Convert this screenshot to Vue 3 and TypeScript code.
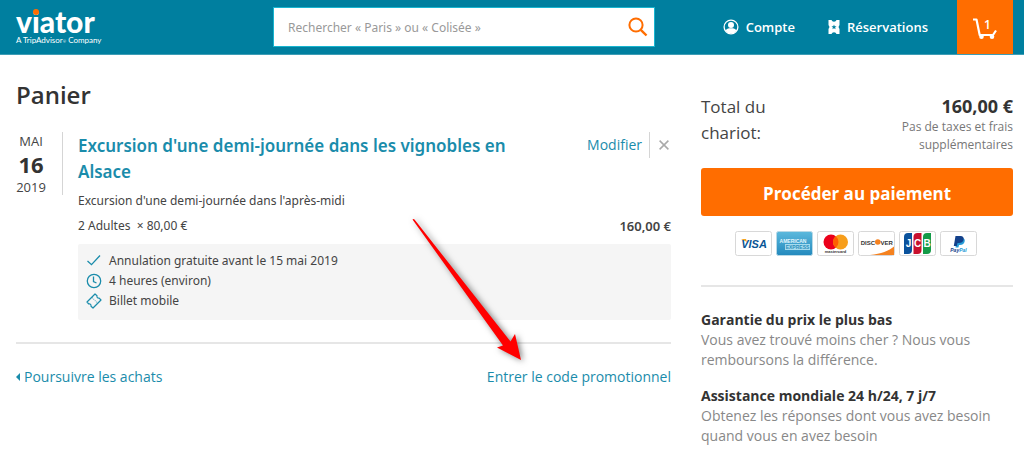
<script setup lang="ts">
import { ref } from 'vue'

interface Note {
  title: string
  lines: string[]
}

const query = ref('')

const notes: Note[] = [
  { title: 'Garantie du prix le plus bas', lines: ['Vous avez trouvé moins cher ? Nous vous', 'remboursons la différence.'] },
  { title: 'Assistance mondiale 24 h/24, 7 j/7', lines: ['Obtenez les réponses dont vous avez besoin', 'quand vous en avez besoin'] },
]
</script>

<template>
  <div class="page">
    <header class="top">
      <a class="logo" href="#" aria-label="viator">
        <span class="word">viator<i class="dot"></i></span>
        <span class="tag">A TripAdvisor<span class="mark">®</span> Company</span>
      </a>
      <form class="search" @submit.prevent>
        <input v-model="query" type="text" aria-label="Rechercher" placeholder="Rechercher « Paris » ou « Colisée »" />
        <button type="submit" aria-label="Lancer la recherche">
          <svg width="20" height="20" viewBox="0 0 20 20" fill="none" stroke="#ff6d00" stroke-width="2">
            <circle cx="8" cy="8" r="6.6" />
            <path d="M12.8 12.8L18.5 18.5" stroke-width="2.4" />
          </svg>
        </button>
      </form>
      <nav class="nav">
        <a href="#" class="account">
          <svg width="16" height="16" viewBox="0 0 16 16">
            <circle cx="8" cy="8" r="6.9" fill="none" stroke="#fff" stroke-width="1.3" />
            <circle cx="8" cy="6" r="3" fill="#fff" />
            <path d="M2.500 11.800C3.400 9.800 5.200 9.300 8 9.300s4.600.5 5.500 2.500C12 14 10 14.500 8 14.500S4 14 2.500 11.800Z" fill="#fff" />
          </svg>
          <span>Compte</span>
        </a>
        <a href="#" class="bookings">
          <svg width="12" height="14" viewBox="0 0 12 14">
            <path fill="#fff" fill-rule="evenodd" d="M.5 0H3.500Q4 1.700 6 1.700T8.500 0H11.500V5L10.500 7L11.500 9V14H8.500Q8 12.300 6 12.300T3.500 14H.5V9L1.500 7L.5 5ZM6 4.500l-.7 1.700-1.800.1 1.400 1.200-.5 1.800L6 8.300l1.600 1-.5-1.800 1.400-1.200-1.800-.1Z" />
          </svg>
          <span>Réservations</span>
        </a>
        <a href="#" class="cart" aria-label="Panier, 1 article">
          <svg width="24" height="22" viewBox="0 0 24 22">
            <path d="M0 1.500H3.500L6.700 17H20L23 12.500" fill="none" stroke="#fff" stroke-width="2.200" stroke-linejoin="round" />
            <circle cx="8.500" cy="18.700" r="2.300" fill="#fff" />
            <circle cx="19" cy="18.700" r="2.300" fill="#fff" />
          </svg>
          <span class="count">1</span>
        </a>
      </nav>
    </header>

    <main class="body">
      <section class="left">
        <h1>Panier</h1>
        <article class="item">
          <time class="date" datetime="2019-05-16">
            <span>MAI</span>
            <strong>16</strong>
            <span>2019</span>
          </time>
          <div class="details">
            <div class="head">
              <h2><a href="#">Excursion d'une demi-journée dans les vignobles en Alsace</a></h2>
              <div class="actions">
                <a href="#">Modifier</a>
                <button type="button" aria-label="Supprimer">
                  <svg width="10" height="10" viewBox="0 0 10 10" fill="none" stroke="#aaa" stroke-width="1.500">
                    <path d="M.6.6l8.800 8.800M9.400.6L.6 9.400" />
                  </svg>
                </button>
              </div>
            </div>
            <p class="option">Excursion d'une demi-journée dans l'après-midi</p>
            <div class="price">
              <span>2 Adultes&nbsp; <small>×</small> 80,00 €</span>
              <strong>160,00 €</strong>
            </div>
            <ul class="features">
              <li>
                <svg width="16" height="16" viewBox="0 0 16 16" fill="none" stroke="#1a8cab" stroke-width="1.300">
                  <path d="M1.500 8l4 3.700L14 2.500" />
                </svg>
                <span>Annulation gratuite avant le 15 mai 2019</span>
              </li>
              <li>
                <svg width="16" height="16" viewBox="0 0 16 16" fill="none" stroke="#1a8cab" stroke-width="1.300">
                  <circle cx="8" cy="8" r="6.700" />
                  <path d="M7.500 3.500v5l3 1.500" />
                </svg>
                <span>4 heures (environ)</span>
              </li>
              <li>
                <svg width="16" height="16" viewBox="0 0 16 16" fill="none" stroke="#1a8cab" stroke-width="1.200" stroke-linejoin="round">
                  <path d="M1 9L9 1l2 1.700c-.4 1.500.6 2.700 2.200 2.400L15 7l-8 8-2-1.800c.3-1.400-.8-2.600-2.200-2.200Z" />
                  <path d="M6 4.500l5 5" stroke-dasharray="1 1" stroke-opacity=".6" />
                </svg>
                <span>Billet mobile</span>
              </li>
            </ul>
          </div>
        </article>
        <div class="links">
          <a href="#" class="back"><i class="caret"></i>Poursuivre les achats</a>
          <a href="#">Entrer le code promotionnel</a>
        </div>
      </section>

      <aside class="side">
        <div class="total">
          <span class="label">Total du chariot:</span>
          <div class="sum">
            <strong>160,00 €</strong>
            <small>Pas de taxes et frais<br />supplémentaires</small>
          </div>
        </div>
        <button type="button" class="pay">Procéder au paiement</button>
        <div class="cards">
          <svg viewBox="0 0 37 25" role="img" aria-label="Visa">
            <rect x=".5" y=".5" width="36" height="24" rx="2" fill="#fff" stroke="#d8d8d8" />
            <path d="M6 8h5l1 3z" fill="#f7a521" />
            <text x="19" y="17" text-anchor="middle" font-size="11" font-weight="800" font-style="italic" fill="#0a5595">VISA</text>
          </svg>
          <svg viewBox="0 0 37 25" role="img" aria-label="American Express">
            <defs>
              <linearGradient id="amex" x1="0" y1="0" x2="0" y2="1">
                <stop offset="0" stop-color="#5cb9dd" />
                <stop offset="1" stop-color="#2389bd" />
              </linearGradient>
            </defs>
            <rect x=".5" y=".5" width="36" height="24" rx="2" fill="url(#amex)" stroke="#b9d9e6" />
            <rect x="9" y="13" width="25" height="6" fill="#a5dbee" />
            <text x="17" y="12" text-anchor="middle" font-size="5" font-weight="800" fill="#e5f6fc">AMERICAN</text>
            <text x="21.500" y="18" text-anchor="middle" font-size="5" font-weight="800" fill="#2b8fbc">EXPRESS</text>
          </svg>
          <svg viewBox="0 0 37 25" role="img" aria-label="Mastercard">
            <rect x=".5" y=".5" width="36" height="24" rx="2" fill="#fff" stroke="#d8d8d8" />
            <circle cx="14" cy="11" r="7.500" fill="#eb001b" />
            <circle cx="23.500" cy="11" r="7.500" fill="#f79e1b" />
            <path d="M18.750 5.200a7.500 7.500 0 0 1 0 11.600a7.500 7.500 0 0 1 0-11.600Z" fill="#ff5f00" />
            <text x="18.500" y="22" text-anchor="middle" font-size="4" font-weight="700" fill="#333">mastercard</text>
          </svg>
          <svg viewBox="0 0 37 25" role="img" aria-label="Discover">
            <rect x=".5" y=".5" width="36" height="24" rx="2" fill="#fff" stroke="#d8d8d8" />
            <path d="M36 15.500V24H12C23 23 31 19.500 36 15.500Z" fill="#f58220" />
            <text x="17" y="13.500" text-anchor="end" font-size="6" font-weight="700" fill="#333">DISC</text>
            <circle cx="19.800" cy="11" r="2.800" fill="#f58220" />
            <text x="22.500" y="13.500" font-size="6" font-weight="700" fill="#333">VER</text>
          </svg>
          <svg viewBox="0 0 37 25" role="img" aria-label="JCB">
            <rect x=".5" y=".5" width="36" height="24" rx="2" fill="#fff" stroke="#d8d8d8" />
            <path d="M5 6q0-4 4-4h4v17q0 4-4 4H5Z" fill="#0a529c" />
            <path d="M14.500 6q0-4 4-4h4v17q0 4-4 4h-4Z" fill="#c8102e" />
            <path d="M24 6q0-4 4-4h4v17q0 4-4 4h-4Z" fill="#149b48" />
            <g fill="#fff" font-size="10" font-weight="800" text-anchor="middle">
              <text x="9.500" y="16">J</text>
              <text x="18.500" y="16">C</text>
              <text x="28" y="16">B</text>
            </g>
          </svg>
          <svg viewBox="0 0 37 25" role="img" aria-label="PayPal">
            <rect x=".5" y=".5" width="36" height="24" rx="2" fill="#fff" stroke="#d8d8d8" />
            <path d="M17 7h5.500q3 .5 2 4-1 3-4.500 3h-1l-.6 2.500H15.500Z" fill="#249bd7" />
            <path d="M15.500 5h5q4 .3 3 4-.8 2.800-4.500 3h-1.500l-.7 3H13.800Z" fill="#14418b" />
            <text x="18.500" y="20.500" text-anchor="middle" font-size="5" font-weight="800" font-style="italic" fill="#14418b">Pay<tspan fill="#249bd7">Pal</tspan></text>
          </svg>
        </div>
        <div class="notes">
          <section v-for="note in notes" :key="note.title">
            <h3>{{ note.title }}</h3>
            <p><template v-for="(line, i) in note.lines" :key="line"><br v-if="i > 0" />{{ line }}</template></p>
          </section>
        </div>
      </aside>
    </main>

    <svg class="arrow" width="130" height="160" viewBox="0 0 130 160" aria-hidden="true">
      <path d="M12.500 9.500Q13.500 8.500 14.500 9.500L110.500 131.500L115 124L121 150L97 137.500L103 135.500Z" fill="#f00" />
    </svg>
  </div>
</template>

<style>
body {
  margin: 0;
  background: #fff;
}
</style>

<style scoped>
.page {
  position: relative;
  font-family: "Open Sans", "Noto Sans", sans-serif;
  font-size: 14px;
  line-height: 20px;
  color: #444;
}

h1, h2, h3, p, ul {
  margin: 0;
  padding: 0;
}

a {
  color: #1a8cab;
  text-decoration: none;
}

svg {
  display: block;
  flex: none;
}

.top {
  display: flex;
  align-items: center;
  height: 55px;
  padding: 0 11px 0 16px;
  background: #007f9f;
  border-bottom: 1px solid #3e9db5;
  box-sizing: border-box;
}

.logo {
  display: flex;
  flex-direction: column;
  flex: 0 0 257px;
  gap: 2px;
  color: #fff;
}

.word {
  position: relative;
  font-family: Lato, sans-serif;
  font-size: 30px;
  font-weight: 900;
  line-height: 26px;
}

.dot {
  position: absolute;
  left: 17px;
  top: 1px;
  width: 6px;
  height: 6px;
  border-radius: 50%;
  background: #ff6d00;
}

.tag {
  font-family: Lato, sans-serif;
  font-size: 8px;
  font-weight: 400;
  line-height: 8px;
}

.mark {
  font-size: 4px;
}

.search {
  display: flex;
  flex: 0 1 382px;
  height: 40px;
  box-sizing: border-box;
  border: 1px solid #18b5d0;
  background: #fff;
}

.search input {
  flex: 1;
  min-width: 0;
  padding: 0 0 0 14px;
  border: 0;
  outline: 0;
  background: transparent;
  font-family: "Noto Sans", sans-serif;
  font-size: 12px;
  color: #444;
}

.search input::placeholder {
  color: #999;
  opacity: 1;
}

.search button {
  padding: 0 6px;
  border: 0;
  background: transparent;
}

.nav {
  display: flex;
  align-items: center;
  align-self: stretch;
  margin-left: auto;
}

.nav a {
  display: flex;
  align-items: center;
  gap: 7px;
  color: #fff;
  font-size: 13px;
  font-weight: 600;
}

.nav .bookings {
  margin: 0 29px 0 33px;
}

.nav .cart {
  position: relative;
  justify-content: center;
  width: 56px;
  height: 54px;
  align-self: flex-start;
  background: #ff6d00;
}

.cart svg {
  margin-top: 4px;
}

.count {
  position: absolute;
  left: 27px;
  top: 15px;
  font-size: 12px;
}

.body {
  display: grid;
  grid-template-columns: minmax(0, 1fr) 312px;
  gap: 30px;
  padding: 0 11px 0 16px;
}

h1 {
  padding-top: 23px;
  font-size: 24px;
  font-weight: 600;
  line-height: 34px;
  color: #333;
}

.item {
  display: flex;
  gap: 15px;
  padding: 20px 0 22px;
  border-bottom: 2px solid #e6e6e6;
}

.date {
  display: flex;
  flex-direction: column;
  align-items: center;
  align-self: flex-start;
  width: 47px;
  height: 63px;
  box-sizing: border-box;
  padding-right: 16px;
  border-right: 1px solid #d5d5d5;
  font-size: 13px;
}

.date strong {
  font-size: 22px;
  line-height: 28px;
  color: #333;
}

.date span {
  line-height: 18px;
}

.details {
  flex: 1;
  min-width: 0;
}

.head {
  display: flex;
  justify-content: space-between;
}

h2 {
  max-width: 450px;
  padding-top: 1px;
  font-family: "Noto Sans", sans-serif;
  font-size: 17px;
  font-weight: 600;
  line-height: 26px;
}

.actions {
  display: flex;
  align-self: flex-start;
  align-items: center;
}

.actions a {
  padding-right: 7px;
  border-right: 1px solid #d5d5d5;
  line-height: 26px;
}

.actions button {
  padding: 0 2px 0 9px;
  border: 0;
  background: transparent;
}

.option {
  padding-top: 6px;
  font-family: "Noto Sans", sans-serif;
  font-size: 12px;
}

.price {
  display: flex;
  justify-content: space-between;
  padding: 5px 0 8px;
  font-family: "Noto Sans", sans-serif;
  font-size: 12px;
}

.price small {
  font-size: 12px;
}

.price strong {
  font-size: 13px;
  font-weight: 600;
}

.features {
  display: flex;
  flex-direction: column;
  padding: 7px 8px 9px;
  border-radius: 2px;
  background: #f5f5f5;
  list-style: none;
  font-family: "Noto Sans", sans-serif;
  font-size: 12px;
}

.features li {
  display: flex;
  align-items: center;
  gap: 7px;
  line-height: 20px;
}

.links {
  display: flex;
  justify-content: space-between;
  padding-top: 23px;
}

.back {
  display: flex;
  align-items: center;
  gap: 4px;
}

.caret {
  border: 4px solid transparent;
  border-right-color: #1a8cab;
  border-left: 0;
}

.side {
  padding-top: 39px;
}

.total {
  display: flex;
  justify-content: space-between;
}

.label {
  width: 90px;
  font-size: 17px;
  line-height: 26px;
}

.sum {
  display: flex;
  flex-direction: column;
  text-align: right;
}

.sum strong {
  font-family: "Noto Sans", sans-serif;
  font-size: 18px;
  line-height: 24px;
  color: #333;
}

.sum small {
  font-size: 12px;
  line-height: 18px;
  color: #777;
}

.pay {
  display: block;
  width: 100%;
  height: 48px;
  margin-top: 14px;
  padding: 4px 0 0;
  border: 0;
  border-radius: 3px;
  background: #ff6d00;
  color: #fff;
  font: inherit;
  font-size: 17px;
  font-weight: 700;
}

.cards {
  display: flex;
  justify-content: center;
  gap: 4px;
  padding: 15px 3px 29px 0;
  border-bottom: 2px solid #e6e6e6;
}

.cards svg {
  width: 37px;
  height: 25px;
  font-family: "Liberation Sans", sans-serif;
}

.notes {
  display: flex;
  flex-direction: column;
  gap: 16px;
  padding-top: 23px;
}

.notes h3 {
  font-size: 14px;
  font-weight: 700;
  line-height: 20px;
  color: #333;
}

.notes p {
  color: #888;
}

.arrow {
  position: absolute;
  left: 400px;
  top: 210px;
  pointer-events: none;
  filter: drop-shadow(2px 1px 3px rgba(0, 0, 0, 0.5));
}
</style>
